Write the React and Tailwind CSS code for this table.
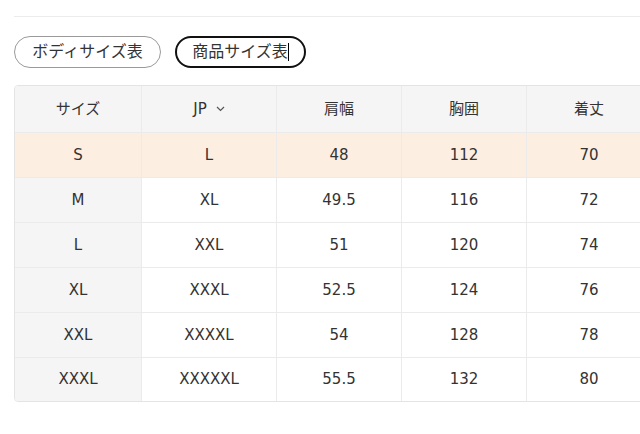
export default function App() {
  const cols = ["w-[126px]", "w-[135px]", "w-[125px]", "w-[125px]", "w-[125px]"];
  const rows = [
    ["S", "L", "48", "112", "70"],
    ["M", "XL", "49.5", "116", "72"],
    ["L", "XXL", "51", "120", "74"],
    ["XL", "XXXL", "52.5", "124", "76"],
    ["XXL", "XXXXL", "54", "128", "78"],
    ["XXXL", "XXXXXL", "55.5", "132", "80"],
  ];
  const font = { fontFamily: '"DejaVu Sans", "Noto Sans CJK JP", sans-serif' };
  return (
    <div className="w-[640px] h-[434px] bg-white overflow-hidden text-[#333] text-[15px]" style={font}>
      <div className="pt-[16px] pl-[14px]">
        <div className="h-px w-[700px] bg-[#ececec]" />
      </div>
      <div className="flex gap-[14px] pl-[14px] pt-[19px] text-[16px]">
        <div className="w-[147px] h-[32px] rounded-full border border-[#9a9a9a] flex items-center justify-center">
          ボディサイズ表
        </div>
        <div className="w-[131px] h-[32px] rounded-full border-2 border-[#111] flex items-center justify-center">
          <span>商品サイズ表</span>
          <span className="w-px h-[18px] bg-black" />
        </div>
      </div>
      <div className="pl-[14px] pt-[17px]">
        <div className="w-[700px] border border-[#e4e4e4] rounded-[4px] overflow-hidden">
          <div className="flex h-[47px] bg-[#f5f5f5] border-b border-[#ebebeb]">
            {["サイズ", "JP", "肩幅", "胸囲", "着丈"].map((h, i) => (
              <div key={i} className={`${cols[i]} shrink-0 flex items-center justify-center ${i > 0 ? "border-l border-[#ebebeb]" : ""}`}>
                {h}
                {i === 1 && (
                  <svg className="ml-[9px]" width="9" height="6" viewBox="0 0 9 6" fill="none" stroke="#555" strokeWidth="1.2">
                    <path d="M1 1l3.5 3.5L8 1" />
                  </svg>
                )}
              </div>
            ))}
          </div>
          {rows.map((r, ri) => (
            <div key={ri} className={`flex ${ri < rows.length - 1 ? "h-[45px] border-b border-[#ebebeb]" : "h-[43px]"} ${ri === 0 ? "bg-[#fdeee2]" : ""}`}>
              {r.map((c, ci) => (
                <div
                  key={ci}
                  className={`${cols[ci]} shrink-0 flex items-center justify-center ${ci > 0 ? "border-l border-[#ebebeb]" : ""} ${ri !== 0 && ci === 0 ? "bg-[#f5f5f5]" : ""}`}
                >
                  {c}
                </div>
              ))}
            </div>
          ))}
        </div>
      </div>
    </div>
  );
}
